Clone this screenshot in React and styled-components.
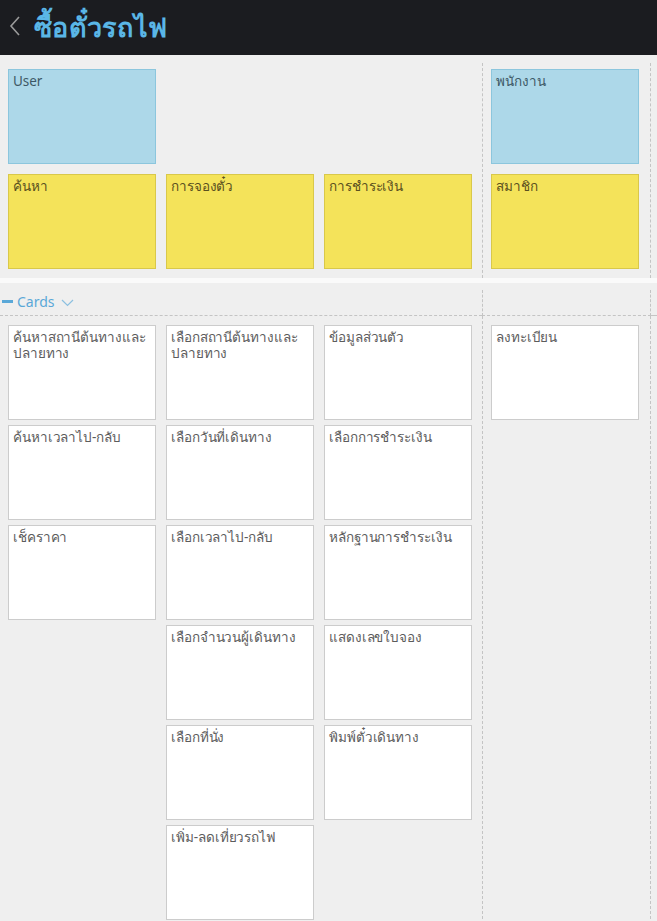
import React from 'react';
import styled, { createGlobalStyle, css } from 'styled-components';

const GlobalStyle = createGlobalStyle`
  html, body {
    margin: 0;
    padding: 0;
    background: #efefef;
  }
  body {
    font-family: "Segoe UI", "Noto Sans", "DejaVu Sans", sans-serif;
  }
`;

const Page = styled.div`
  width: 657px;
  min-height: 921px;
  background: #efefef;
  overflow: hidden;
`;

const Header = styled.header`
  height: 55px;
  background: #1b1c20;
  display: flex;
  align-items: center;
  gap: 12px;
  padding-left: 8px;
  box-sizing: border-box;
`;

const BackIcon = styled.svg`
  width: 14px;
  height: 22px;
  margin-top: -4px;
`;

const Title = styled.h1`
  margin: 0;
  font-size: 27px;
  font-weight: 700;
  color: #5ab6e6;
  letter-spacing: 0.3px;
`;

const TopSection = styled.section`
  display: grid;
  grid-template-columns: 482px 169px 1fr;
  padding-top: 8px;
  border-bottom: 5px solid #fafafa;
`;

const CardsSection = styled.section`
  display: grid;
  grid-template-columns: 482px 169px 1fr;
  grid-template-rows: 26px auto;
  padding-top: 7px;
`;

const dashedSides = css`
  border-left: 1px dashed #c4c4c4;
  border-right: 1px dashed #c4c4c4;
`;

const Group = styled.div`
  display: grid;
  grid-template-columns: repeat(3, 148px);
  column-gap: 10px;
  row-gap: 10px;
  align-content: start;
  padding: 6px 0 9px 8px;
`;

const CardColumns = styled.div`
  display: flex;
  align-items: flex-start;
  gap: 10px;
  padding: 9px 0 9px 8px;
`;

const ColumnStack = styled.div`
  display: flex;
  flex-direction: column;
  gap: 5px;
`;

const Lane = styled.div`
  ${dashedSides};
  display: flex;
  flex-direction: column;
  gap: ${({ $rowGap }) => $rowGap}px;
  padding: ${({ $top }) => $top}px 11px 9px 8px;
  box-sizing: border-box;
`;

const LaneHead = styled.div`
  border-bottom: 1px dashed #c4c4c4;
  ${({ $lane }) => $lane && dashedSides};
  display: flex;
  align-items: center;
  padding-bottom: 2px;
`;

const Filler = styled.div``;

const Card = styled.div`
  width: 148px;
  height: 95px;
  box-sizing: border-box;
  padding: 3px 4px;
  font-size: 13.5px;
  line-height: 16px;
  letter-spacing: -0.1px;
  ${({ $kind }) =>
    $kind === 'role'
      ? css`
          background: #add8e9;
          border: 1px solid #8cc6dd;
          color: #3d5866;
        `
      : $kind === 'feature'
      ? css`
          background: #f4e35a;
          border: 1px solid #d9c84a;
          color: #5a5020;
        `
      : css`
          background: #ffffff;
          border: 1px solid #cccccc;
          color: #5c5c5c;
        `}
`;

const Empty = styled.div``;

const CardsTitle = styled.div`
  display: flex;
  align-items: center;
  gap: 4px;
  color: #5aa8d8;
  font-size: 14px;
  padding-left: 2px;
`;

const Minus = styled.span`
  width: 11px;
  height: 3px;
  background: #5aa8d8;
  display: inline-block;
`;

const Chevron = styled.svg`
  width: 13px;
  height: 8px;
  margin-left: 2px;
  margin-top: 2px;
`;

const columns = [
  ['ค้นหาสถานีต้นทางและปลายทาง', 'ค้นหาเวลาไป-กลับ', 'เช็คราคา'],
  [
    'เลือกสถานีต้นทางและปลายทาง',
    'เลือกวันที่เดินทาง',
    'เลือกเวลาไป-กลับ',
    'เลือกจำนวนผู้เดินทาง',
    'เลือกที่นั่ง',
    'เพิ่ม-ลดเที่ยวรถไฟ',
  ],
  ['ข้อมูลส่วนตัว', 'เลือกการชำระเงิน', 'หลักฐานการชำระเงิน', 'แสดงเลขใบจอง', 'พิมพ์ตั๋วเดินทาง'],
];

const App = () => (
  <Page>
    <GlobalStyle />
    <Header>
      <BackIcon viewBox="0 0 14 22">
        <path d="M11 2 L3 11 L11 20" fill="none" stroke="#9a9a9a" strokeWidth="1.6" />
      </BackIcon>
      <Title>ซื้อตั๋วรถไฟ</Title>
    </Header>

    <TopSection>
      <Group>
        <Card $kind="role">User</Card>
        <Empty />
        <Empty />
        <Card $kind="feature">ค้นหา</Card>
        <Card $kind="feature">การจองตั๋ว</Card>
        <Card $kind="feature">การชำระเงิน</Card>
      </Group>
      <Lane $top={6} $rowGap={10}>
        <Card $kind="role">พนักงาน</Card>
        <Card $kind="feature">สมาชิก</Card>
      </Lane>
      <Filler />
    </TopSection>

    <CardsSection>
      <LaneHead>
        <CardsTitle>
          <Minus />
          Cards
          <Chevron viewBox="0 0 13 8">
            <path d="M1 1 L6.5 6.5 L12 1" fill="none" stroke="#8cc0e0" strokeWidth="1.2" />
          </Chevron>
        </CardsTitle>
      </LaneHead>
      <LaneHead $lane />
      <LaneHead />
      <CardColumns>
        {columns.map((col, i) => (
          <ColumnStack key={i}>
            {col.map((t) => (
              <Card key={t}>{t}</Card>
            ))}
          </ColumnStack>
        ))}
      </CardColumns>
      <Lane $top={9} $rowGap={5}>
        <Card>ลงทะเบียน</Card>
      </Lane>
      <Filler />
    </CardsSection>
  </Page>
);

export default App;
